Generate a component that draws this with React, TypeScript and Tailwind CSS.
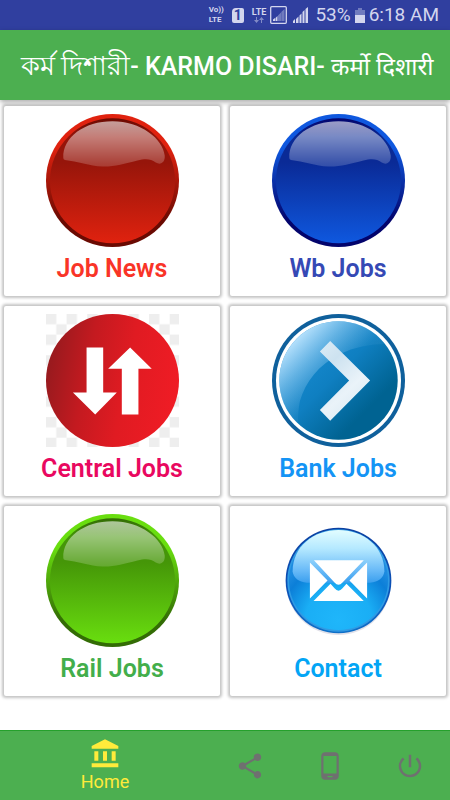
import type { ReactNode } from 'react';
import { MdAccountBalance, MdPhoneAndroid, MdPowerSettingsNew, MdShare } from 'react-icons/md';

interface GlossyButtonProps {
  id: string;
  bright: string;
  dark: string;
  deep: string;
}

function GlossyButton({ id, bright, dark, deep }: GlossyButtonProps) {
  return (
    <svg viewBox="0 0 400 400" className="w-full" aria-hidden="true">
      <defs>
        <linearGradient id={`${id}-rim`} x1="0" y1="0" x2="0" y2="1">
          <stop offset="0" stopColor={bright} />
          <stop offset="0.25" stopColor={bright} />
          <stop offset="0.8" stopColor={deep} />
          <stop offset="1" stopColor={deep} />
        </linearGradient>
        <linearGradient id={`${id}-body`} x1="0" y1="0" x2="0" y2="1">
          <stop offset="0" stopColor={deep} />
          <stop offset="0.15" stopColor={dark} />
          <stop offset="0.35" stopColor={dark} />
          <stop offset="1" stopColor={bright} />
        </linearGradient>
        <linearGradient id={`${id}-gloss`} x1="0" y1="0" x2="0" y2="1">
          <stop offset="0" stopColor="#fff" stopOpacity="0.6" />
          <stop offset="1" stopColor="#fff" stopOpacity="0.16" />
        </linearGradient>
      </defs>
      <circle cx="200" cy="200" r="200" fill={`url(#${id}-rim)`} />
      <circle cx="200" cy="201" r="188" fill={`url(#${id}-body)`} />
      <path
        d="M52 132C50 70 115 22 200 22C285 22 352 75 357 125C359 145 345 155 330 146C315 135 300 134 275 140C235 150 205 159 170 158C130 156 95 142 57 138Q52 137 52 132Z"
        fill={`url(#${id}-gloss)`}
      />
    </svg>
  );
}

function TransferIcon() {
  return (
    <svg viewBox="0 0 400 400" className="w-full" aria-hidden="true">
      <defs>
        <pattern id="checker" width="62" height="62" patternUnits="userSpaceOnUse">
          <rect width="31" height="31" fill="#eee" />
          <rect x="31" y="31" width="31" height="31" fill="#eee" />
        </pattern>
        <linearGradient id="transfer" x1="0" y1="0.4" x2="1" y2="0.6">
          <stop offset="0" stopColor="#961a1e" />
          <stop offset="0.3" stopColor="#c41a20" />
          <stop offset="0.6" stopColor="#e01b22" />
          <stop offset="1" stopColor="#f01c25" />
        </linearGradient>
      </defs>
      <rect width="400" height="400" fill="url(#checker)" />
      <circle cx="200" cy="200" r="200" fill="url(#transfer)" />
      <path d="M122 101H172V236H213L148 302L81 236H122Z" fill="#fff" />
      <path d="M253 101L318 165H278V302H228V165H187Z" fill="#fff" />
    </svg>
  );
}

function ChevronIcon() {
  return (
    <svg viewBox="0 0 400 400" className="w-full" aria-hidden="true">
      <defs>
        <linearGradient id="chev-body" x1="0.15" y1="0.15" x2="0.85" y2="0.85">
          <stop offset="0" stopColor="#1a8fd6" />
          <stop offset="0.45" stopColor="#0f7fc1" />
          <stop offset="0.85" stopColor="#006392" />
          <stop offset="1" stopColor="#006392" />
        </linearGradient>
        <linearGradient id="chev-gloss" gradientUnits="userSpaceOnUse" x1="75" y1="75" x2="190" y2="190">
          <stop offset="0" stopColor="#c4e8ff" stopOpacity="0.9" />
          <stop offset="0.45" stopColor="#b0dcfa" stopOpacity="0.5" />
          <stop offset="1" stopColor="#8fcaf0" stopOpacity="0.08" />
        </linearGradient>
        <linearGradient id="chev-arrow" x1="0" y1="0" x2="0.6" y2="1">
          <stop offset="0" stopColor="#dcecf6" />
          <stop offset="0.3" stopColor="#cde2f0" />
          <stop offset="0.7" stopColor="#eaf3f9" />
          <stop offset="1" stopColor="#dbeaf3" />
        </linearGradient>
        <clipPath id="chev-clip">
          <circle cx="200" cy="200" r="178" />
        </clipPath>
      </defs>
      <circle cx="200" cy="200" r="200" fill="#0f609c" />
      <circle cx="200" cy="200" r="188" fill="#fff" />
      <circle cx="200" cy="200" r="178" fill="url(#chev-body)" />
      <path
        d="M0 0H400V94C330 84 262 92 205 120C140 152 100 205 84 262Q76 300 76 400H0Z"
        fill="url(#chev-gloss)"
        clipPath="url(#chev-clip)"
      />
      <path d="M175 81L295 200L175 321L144 289L232 200L144 113Z" fill="url(#chev-arrow)" />
    </svg>
  );
}

function MailIcon() {
  return (
    <svg viewBox="0 0 400 400" className="w-full" aria-hidden="true">
      <defs>
        <radialGradient id="mail-body" gradientUnits="userSpaceOnUse" cx="200" cy="320" r="200">
          <stop offset="0" stopColor="#1fb6fa" />
          <stop offset="0.5" stopColor="#1aaef5" />
          <stop offset="0.85" stopColor="#0c7fd8" />
          <stop offset="1" stopColor="#1d8be0" />
        </radialGradient>
        <linearGradient id="mail-gloss" x1="0" y1="0" x2="0" y2="1">
          <stop offset="0" stopColor="#e2fdff" />
          <stop offset="0.35" stopColor="#b5e9ff" />
          <stop offset="0.75" stopColor="#6cbcf8" />
          <stop offset="1" stopColor="#3a9fee" />
        </linearGradient>
        <linearGradient id="mail-rim" x1="0" y1="0" x2="0" y2="1">
          <stop offset="0" stopColor="#0c3fa0" />
          <stop offset="0.6" stopColor="#0b52b8" />
          <stop offset="1" stopColor="#1070c8" />
        </linearGradient>
      </defs>
      <circle cx="200" cy="206" r="158" fill="#e2e2ea" />
      <circle cx="200" cy="200" r="159" fill="url(#mail-rim)" />
      <circle cx="200" cy="200" r="154" fill="#2f9be4" />
      <circle cx="200" cy="200" r="149" fill="url(#mail-body)" />
      <path
        d="M62 172C62 98 125 48 200 48C275 48 338 98 338 172C336 192 320 204 295 207H105C80 204 64 192 62 172Z"
        fill="url(#mail-gloss)"
      />
      <path
        d="M126 139H276L212 206Q200 220 188 206ZM114 146V254L167 200ZM286 146V254L233 200ZM125 262L176 210L188 223Q200 238 212 223L224 210L276 262Z"
        fill="#fff"
      />
    </svg>
  );
}

const CATEGORIES: { label: string; color: string; icon: ReactNode }[] = [
  {
    label: 'Job News', color: 'text-[#f93427]',
    icon: <GlossyButton id="red" bright="#e0220f" dark="#96150a" deep="#6a0a02" />,
  },
  {
    label: 'Wb Jobs', color: 'text-[#3549b5]',
    icon: <GlossyButton id="blue" bright="#0f58df" dark="#0a2a96" deep="#03046c" />,
  },
  { label: 'Central Jobs', color: 'text-[#e9085f]', icon: <TransferIcon /> },
  { label: 'Bank Jobs', color: 'text-[#1494f5]', icon: <ChevronIcon /> },
  {
    label: 'Rail Jobs', color: 'text-[#43ae4b]',
    icon: <GlossyButton id="green" bright="#69de0f" dark="#459608" deep="#336c05" />,
  },
  { label: 'Contact', color: 'text-[#03a5f5]', icon: <MailIcon /> },
];

const ACTIONS = [
  { label: 'Share', Icon: MdShare },
  { label: 'Phone', Icon: MdPhoneAndroid },
  { label: 'Exit', Icon: MdPowerSettingsNew },
];

function StatusBar() {
  return (
    <div className="flex h-[30px] items-center justify-end bg-[#303f9f] pr-[11px] text-[#d3d6ee]">
      <div className="mr-2 flex flex-col text-[8px] leading-[10px] font-bold">
        <span>Vo))</span>
        <span>LTE</span>
      </div>
      <div className="mr-2 flex h-[15px] w-3 items-center justify-center rounded-xs rounded-tl-[4px] bg-[#d3d6ee] text-[14px] leading-none font-bold text-[#303f9f]">
        1
      </div>
      <div className="mr-1 flex flex-col items-center text-[9px] leading-[9px] font-bold">
        <span>LTE</span>
        <svg viewBox="0 0 10 6" className="h-[6px] w-[10px] opacity-50" fill="currentColor" aria-hidden="true">
          <path d="M2 0H3V3H5L2.500 6L0 3H2ZM7 6H8V3H10L7.500 0L5 3H7Z" />
        </svg>
      </div>
      <svg viewBox="0 0 17 18" className="mr-1.5 h-[18px] w-[17px]" aria-hidden="true">
        <rect x="0.700" y="0.700" width="15.600" height="16.600" rx="1" fill="none" stroke="currentColor" strokeWidth="1.300" />
        <path d="M3 15V13.500L5 12V15ZM5.500 15V12L7.500 10V15Z" fill="currentColor" />
        <path d="M8 15V9.500L11 6.500V15ZM11.300 15V6L14.500 3V15Z" fill="currentColor" opacity="0.4" />
      </svg>
      <svg viewBox="0 0 16 16" className="mr-1.5 h-4 w-4" fill="currentColor" aria-hidden="true">
        <path d="M0 16V14L2 12V16ZM3 16V12L5.500 9.500V16ZM6.500 16V8.500L8.500 6.500V16ZM9.500 16V5L11.500 3V16ZM12.500 16V2L15 0V16Z" />
      </svg>
      <span className="text-[19px]">53%</span>
      <svg viewBox="0 0 10 15" className="mx-1 h-[15px] w-[10px]" fill="currentColor" aria-hidden="true">
        <path d="M3 0H7V2H10V7H0V2H3Z" opacity="0.4" />
        <path d="M0 7H10V15H0Z" />
      </svg>
      <span className="text-[19px]">6:18 AM</span>
    </div>
  );
}

export default function App() {
  return (
    <div className="flex min-h-screen flex-col bg-white font-[Roboto,'Noto_Sans',sans-serif]">
      <StatusBar />
      <header className="flex h-[70px] items-center justify-center bg-[#4caf50] pt-0.5 pl-1 shadow-[0_2px_5px_rgba(0,0,0,0.35)]">
        <h1 className="text-[25px] leading-9 font-medium whitespace-nowrap text-white">
          <span className="text-[27px] leading-9">কর্ম দিশারী</span>- KARMO DISARI-{' '}
          <span className="text-[24px] font-normal">कर्मो दिशारी</span>
        </h1>
      </header>

      <main className="grid grid-cols-2 gap-2.5 px-1 pt-1.5">
        {CATEGORIES.map(({ label, color, icon }) => (
          <button
            key={label}
            type="button"
            className="flex h-[190px] cursor-pointer flex-col items-center rounded-xs bg-white pt-2 shadow-[0_0_3px_2px_rgba(0,0,0,0.24)]"
          >
            <span className="w-[133px]">{icon}</span>
            <span className={`mt-1 text-[25px] leading-9 font-semibold ${color}`}>{label}</span>
          </button>
        ))}
      </main>

      <nav className="mt-auto flex h-[70px] border-t border-[#25a02c] bg-[#4caf50]">
        <button type="button" className="flex flex-[21] cursor-pointer flex-col items-center pt-[7px] text-[#ffeb3b]">
          <MdAccountBalance size={32} />
          <span className="text-[18px] leading-6">Home</span>
        </button>
        {ACTIONS.map(({ label, Icon }) => (
          <button
            key={label}
            type="button"
            aria-label={label}
            className="flex flex-[8] cursor-pointer items-center justify-center text-[#6f7070]"
          >
            <Icon size={30} />
          </button>
        ))}
      </nav>
    </div>
  );
}
